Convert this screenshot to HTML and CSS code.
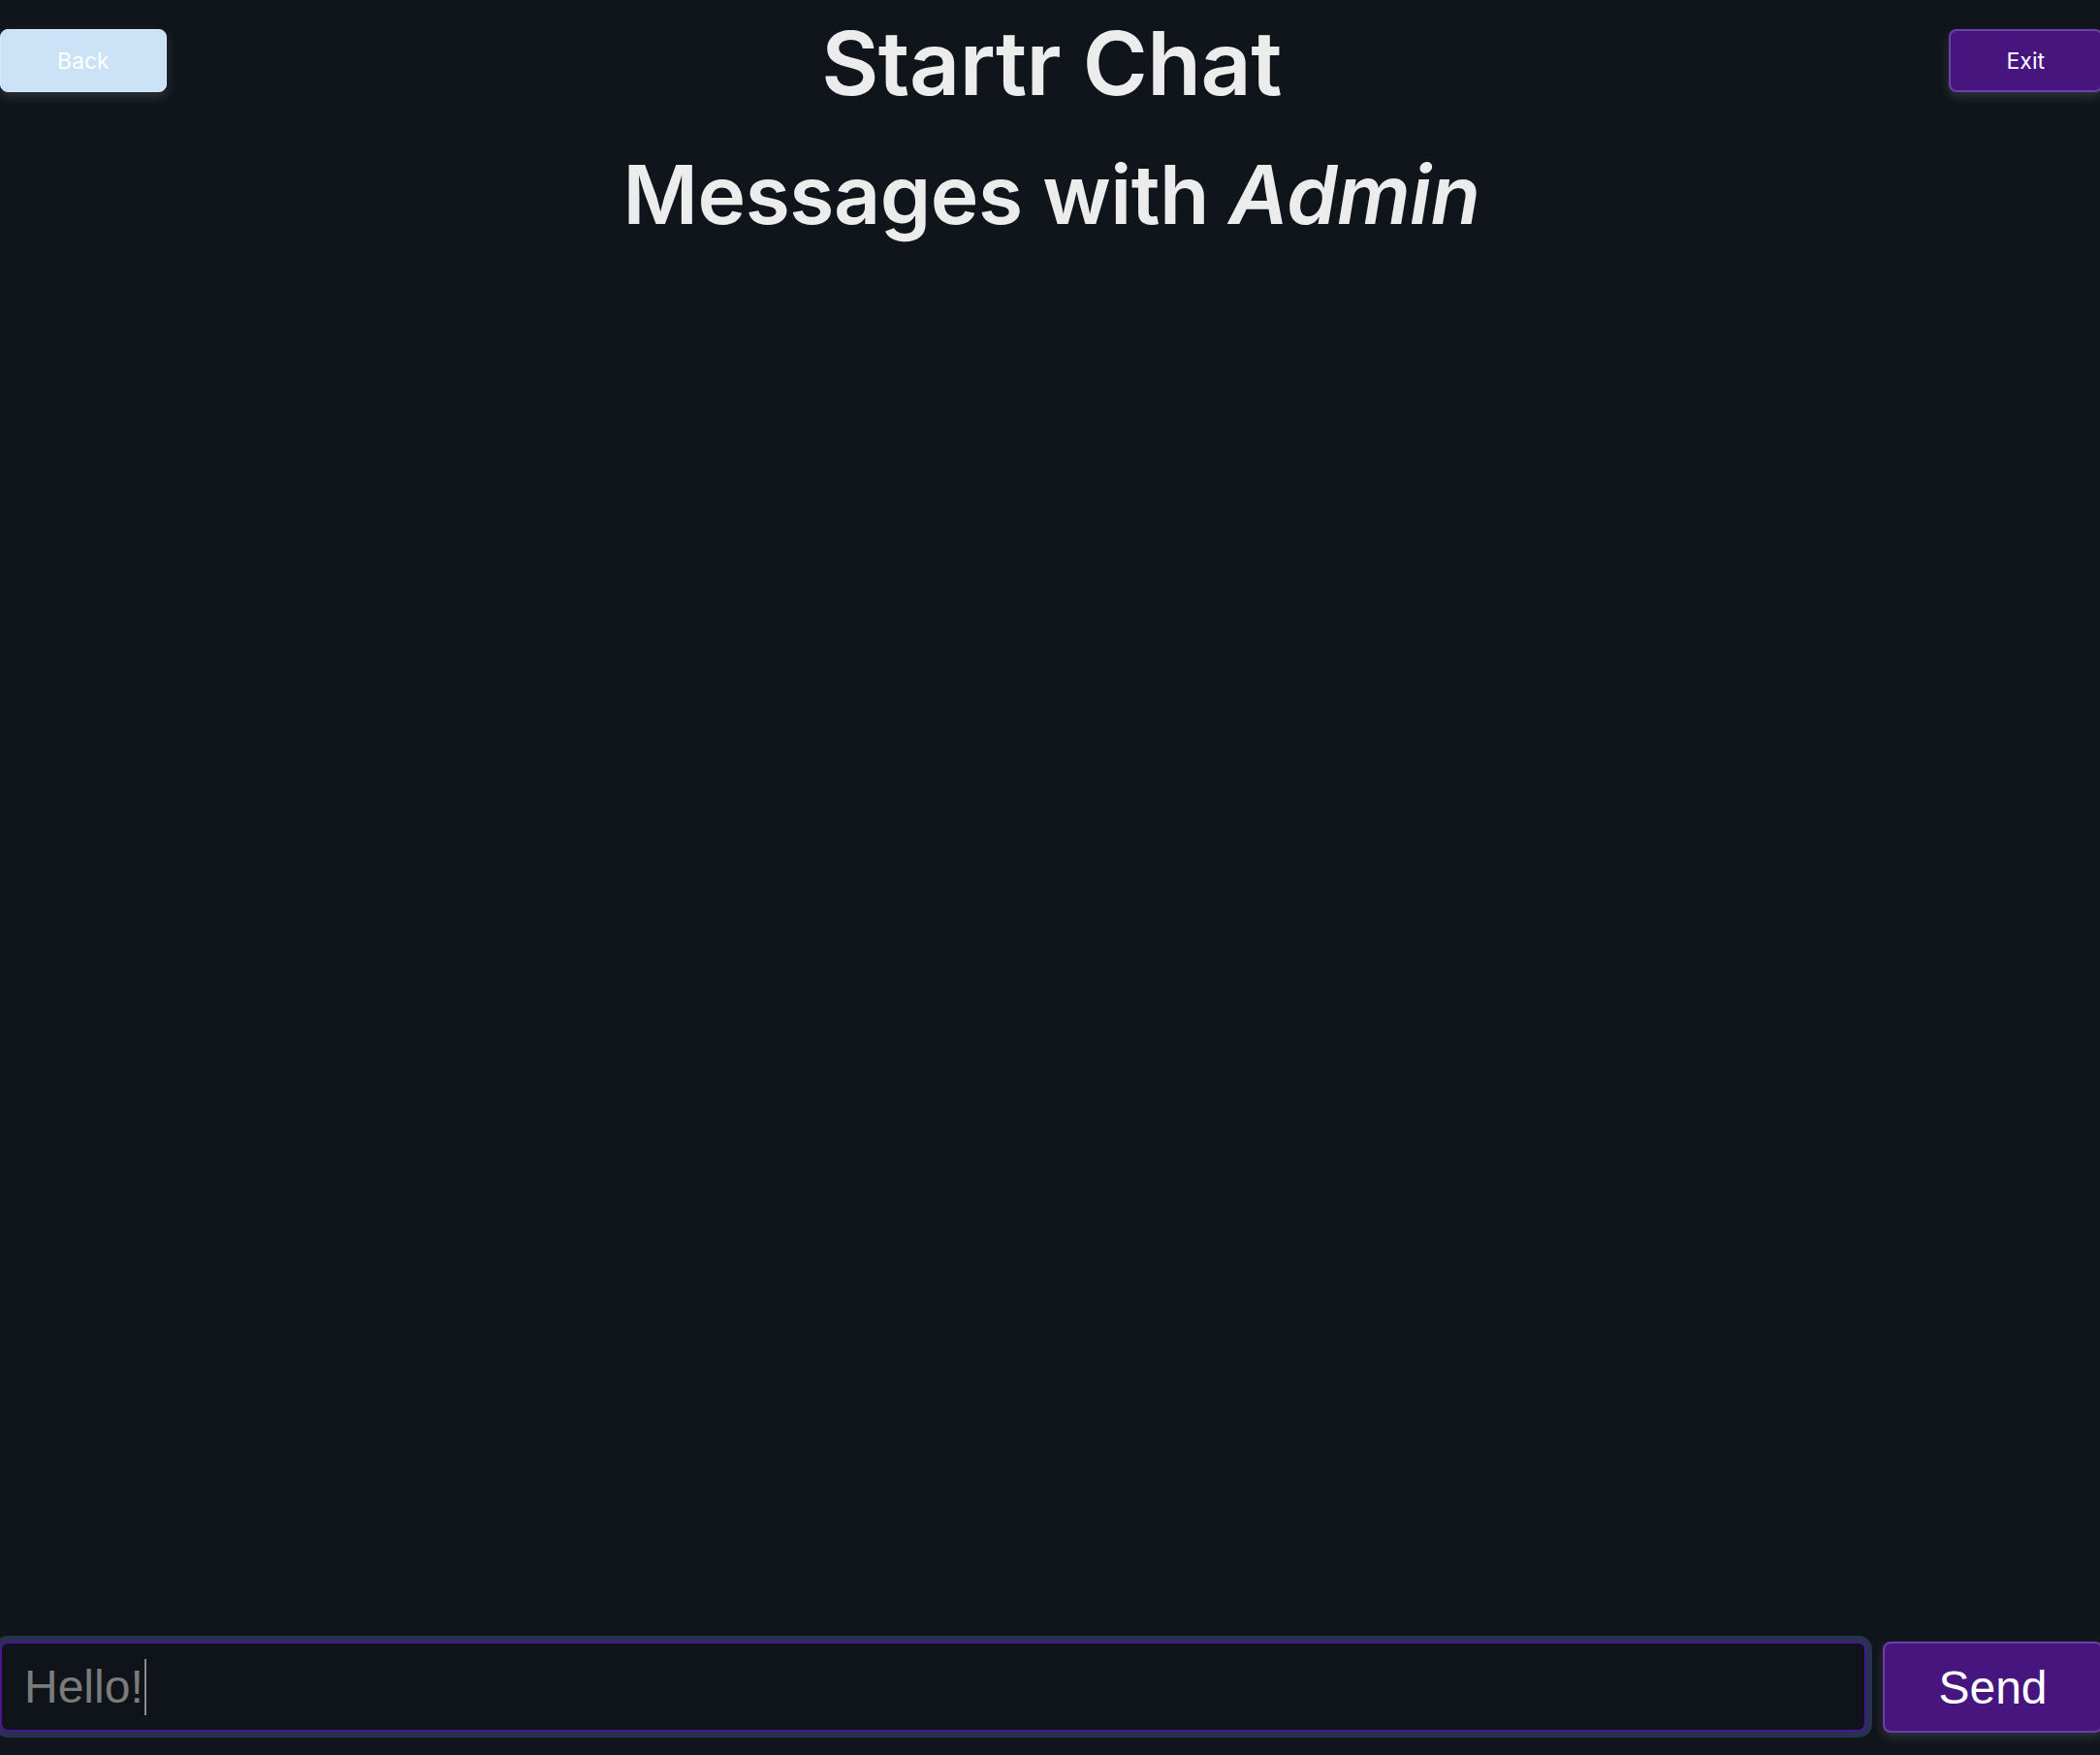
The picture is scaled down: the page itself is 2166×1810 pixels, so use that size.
FILE: index.html
```html
<!DOCTYPE html>
<html lang="en">
<head>
<meta charset="utf-8">
<title>Startr Chat</title>
<link rel="stylesheet" href="styles.css">
</head>
<body>
<div class="page">
  <header class="top">
    <button class="btn btn-back">Back</button>
    <h1 class="title">Startr Chat</h1>
    <button class="btn btn-exit">Exit</button>
  </header>
  <h2 class="subtitle">Messages with <em>Admin</em></h2>
  <main class="messages"></main>
  <form class="composer">
    <div class="field"><span class="field-text">Hello!</span><span class="caret"></span></div>
    <button type="button" class="send">Send</button>
  </form>
</div>
</body>
</html>
```
FILE: styles.css
```css
html, body {
  margin: 0;
  padding: 0;
  height: 100%;
  background: #10141b;
  overflow: hidden;
}
.page {
  width: 2169px;
  height: 1810px;
  display: flex;
  flex-direction: column;
  font-family: Inter, "Noto Sans", sans-serif;
  color: #ececec;
}
.top {
  display: grid;
  grid-template-columns: 1fr auto 1fr;
  align-items: start;
}
.btn {
  height: 65px;
  margin-top: 30px;
  padding: 0 58px;
  border-radius: 8px;
  font-family: Inter, "Noto Sans", sans-serif;
  font-size: 23px;
  font-weight: 400;
  color: #ffffff;
  box-shadow: 0 5px 12px rgba(170, 180, 195, 0.2);
}
.btn-back {
  justify-self: start;
  background: #cbe2f7;
  border: 1px solid #d6e8f9;
}
.btn-exit {
  justify-self: end;
  background: #46167e;
  border: 2px solid #6c40a6;
}
.title {
  margin: 10px 0 0;
  font-size: 91px;
  line-height: 110px;
  font-weight: 600;
  letter-spacing: -0.5px;
  text-align: center;
}
.subtitle {
  margin: 30px 0 0;
  font-size: 84px;
  line-height: 102px;
  font-weight: 600;
  letter-spacing: -0.5px;
  text-align: center;
}
.subtitle em {
  font-style: italic;
}
.messages {
  flex: 1;
}
.composer {
  display: flex;
  align-items: flex-start;
  gap: 17px;
  margin: 0 0 23px;
}
.field {
  flex: 1;
  height: 93px;
  box-sizing: border-box;
  border: 2px solid #4b1692;
  border-radius: 8px;
  box-shadow: 0 0 0 6px #26324f;
  background: #0f131a;
  display: flex;
  align-items: center;
  padding-left: 23px;
  font-family: "Liberation Sans", Arial, sans-serif;
  font-size: 48px;
  color: #7b7b7b;
}
.caret {
  display: inline-block;
  width: 2px;
  height: 58px;
  margin-left: 1px;
  background: #8a8a8a;
}
.send {
  width: 227px;
  height: 94px;
  box-sizing: border-box;
  background: #46167e;
  border: 2px solid #6b3fa3;
  border-radius: 8px;
  color: #ffffff;
  font-family: "Liberation Sans", Arial, sans-serif;
  font-size: 48px;
  box-shadow: 0 5px 12px rgba(170, 180, 195, 0.2);
}
```
